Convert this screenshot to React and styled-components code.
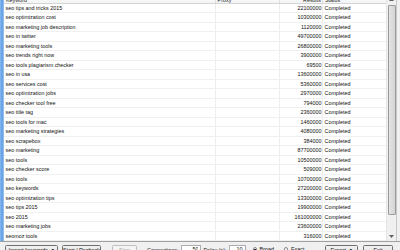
import React from "react";
import styled, { createGlobalStyle } from "styled-components";

const rows = [
  ["seo tips and tricks 2015", "22100000"],
  ["seo optimization cost", "10300000"],
  ["seo marketing job description", "1120000"],
  ["seo in twitter", "49700000"],
  ["seo marketing tools", "26800000"],
  ["seo trends right now", "3900000"],
  ["seo tools plagiarism checker", "69500"],
  ["seo in usa", "13600000"],
  ["seo services cost", "5360000"],
  ["seo optimization jobs", "2970000"],
  ["seo checker tool free", "794000"],
  ["seo title tag", "2360000"],
  ["seo tools for mac", "1460000"],
  ["seo marketing strategies", "4080000"],
  ["seo scrapebox", "384000"],
  ["seo marketing", "87700000"],
  ["seo tools", "10500000"],
  ["seo checker score", "509000"],
  ["seo tools", "10700000"],
  ["seo keywords", "27200000"],
  ["seo optimization tips", "13300000"],
  ["seo tips 2015", "19900000"],
  ["seo 2015", "161000000"],
  ["seo marketing jobs", "23600000"],
  ["seomoz tools", "316000"],
];

const App = () => (
  <Window>
    <GlobalStyle />
    <ListFrame>
      <Strip />
      <Table>
        <HeaderRow>
          <HeadCell>Keyword</HeadCell>
          <HeadCell>Proxy</HeadCell>
          <HeadCell $right>Results</HeadCell>
          <HeadCell $last>Status</HeadCell>
        </HeaderRow>
        {rows.map(([kw, res], i) => (
          <Row key={i}>
            <Cell>{kw}</Cell>
            <Cell />
            <Cell $right>{res}</Cell>
            <Cell $last>Completed</Cell>
          </Row>
        ))}
      </Table>
      <Scrollbar>
        <ArrowBtn>
          <svg width="5" height="3" viewBox="0 0 5 3">
            <path d="M0 3 L2.5 0 L5 3 Z" fill="#606060" />
          </svg>
        </ArrowBtn>
        <Track>
          <Thumb />
        </Track>
        <ArrowBtn>
          <svg width="5" height="3" viewBox="0 0 5 3">
            <path d="M0 0 L2.5 3 L5 0 Z" fill="#606060" />
          </svg>
        </ArrowBtn>
      </Scrollbar>
      <RightEdge />
    </ListFrame>
    <Toolbar>
      <Button $w={53}>
        Import keywords <Caret>▼</Caret>
      </Button>
      <Button $w={39} $ml={4}>Start / Recheck</Button>
      <Button $w={25} $ml={11} disabled>Stop</Button>
      <Label $ml={10}>Connections:</Label>
      <Input $w={20} $ml={3} defaultValue="50" />
      <Label $ml={2}>Delay (s):</Label>
      <Input $w={17} $ml={2} defaultValue="10" />
      <RadioItem $ml={7}>
        <Radio $on />
        Broad
      </RadioItem>
      <RadioItem $ml={10}>
        <Radio />
        Exact
      </RadioItem>
      <Button $w={33} $ml="auto">
        Export <Caret>▼</Caret>
      </Button>
      <Button $w={30} $ml={5}>Exit</Button>
    </Toolbar>
  </Window>
);

const GlobalStyle = createGlobalStyle`
  html, body {
    margin: 0;
    padding: 0;
    background: #f0f0f0;
    overflow: hidden;
  }
`;

const font = `"Liberation Sans", Arial, sans-serif`;

const Window = styled.div`
  width: 400px;
  height: 250px;
  overflow: hidden;
  display: flex;
  flex-direction: column;
  background: #f0f0f0;
  font-family: ${font};
  font-size: 5.4px;
  color: #111;
`;

const ListFrame = styled.div`
  margin-top: -6px;
  height: 248px;
  flex: none;
  display: flex;
  background: #fff;
  border-bottom: 0.5px solid #a0a0a0;
  box-sizing: border-box;
`;

const Strip = styled.div`
  width: 4px;
  flex: none;
  background: linear-gradient(90deg, #8dbbee 0%, #5d9be6 55%, #a8caf0 100%);
`;

const Table = styled.div`
  flex: 1;
  display: flex;
  flex-direction: column;
`;

const cols = "211.6px 64.4px 43px 1fr";

const HeaderRow = styled.div`
  display: grid;
  grid-template-columns: ${cols};
  height: 9.5px;
  flex: none;
  box-sizing: border-box;
  background: linear-gradient(#ffffff, #f3f4f6);
  border-bottom: 1px solid #d5d5d5;
`;

const HeadCell = styled.div`
  line-height: 6px;
  padding: ${(p) => (p.$right ? "3px 1px 0 0" : "3px 0 0 2px")};
  text-align: ${(p) => (p.$right ? "right" : "left")};
  border-right: ${(p) => (p.$last ? "none" : "1px solid #dedfe2")};
  color: #222;
  white-space: nowrap;
  overflow: hidden;
`;

const Row = styled.div`
  display: grid;
  grid-template-columns: ${cols};
  height: 9.53px;
  flex: none;
  box-sizing: border-box;
  border-bottom: 1px solid #f0f0f0;
`;

const Cell = styled.div`
  line-height: 8.5px;
  padding: ${(p) => (p.$right ? "0 0.5px 0 0" : "0 0 0 1.5px")};
  text-align: ${(p) => (p.$right ? "right" : "left")};
  border-right: ${(p) => (p.$last ? "none" : "1px solid #ededed")};
  white-space: nowrap;
  overflow: hidden;
`;

const Scrollbar = styled.div`
  width: 9px;
  flex: none;
  display: flex;
  flex-direction: column;
  background: #f0f0f0;
  border-left: 1px solid #e6e6e6;
`;

const ArrowBtn = styled.div`
  height: 10px;
  flex: none;
  display: flex;
  align-items: center;
  justify-content: center;
`;

const Track = styled.div`
  flex: 1;
  display: flex;
  flex-direction: column;
  padding: 1px 0.5px 0;
`;

const Thumb = styled.div`
  height: 208px;
  border: 0.5px solid #9c9c9c;
  border-radius: 1px;
  background: linear-gradient(90deg, #e4e4e4, #d4d4d4);
`;

const RightEdge = styled.div`
  width: 3px;
  flex: none;
  background: #f0f0f0;
  border-left: 0.5px solid #c8c8c8;
`;

const Toolbar = styled.div`
  flex: 1;
  display: flex;
  align-items: flex-start;
  padding: 2.5px 7px 0 5px;
  background: #f0f0f0;
  overflow: hidden;
`;

const Button = styled.button`
  flex: none;
  width: ${(p) => p.$w}px;
  height: 12px;
  margin-left: ${(p) => (p.$ml === "auto" ? "auto" : `${p.$ml || 0}px`)};
  padding: 0;
  box-sizing: border-box;
  border: 0.5px solid ${(p) => (p.disabled ? "#bfbfbf" : "#707070")};
  border-radius: 1.5px;
  background: ${(p) =>
    p.disabled ? "#f4f4f4" : "linear-gradient(#f2f2f2, #e5e5e5 50%, #dddddd)"};
  color: ${(p) => (p.disabled ? "#a0a0a0" : "#111")};
  font-family: ${font};
  font-size: 5.4px;
  line-height: 7px;
  text-align: center;
  display: flex;
  align-items: flex-start;
  justify-content: center;
  padding-top: 1.5px;
  white-space: nowrap;
`;

const Caret = styled.span`
  font-size: 3.5px;
  margin-left: 3px;
`;

const Label = styled.span`
  flex: none;
  margin-left: ${(p) => p.$ml || 0}px;
  line-height: 7px;
  padding-top: 2px;
  white-space: nowrap;
`;

const Input = styled.input`
  flex: none;
  width: ${(p) => p.$w}px;
  height: 11px;
  margin: 0 0 0 ${(p) => p.$ml || 0}px;
  box-sizing: border-box;
  border: 0.5px solid #abadb3;
  background: #fff;
  font-family: ${font};
  font-size: 5.4px;
  text-align: right;
  padding: 0 2px 3px 0;
  color: #111;
  outline: none;
`;

const RadioItem = styled.span`
  flex: none;
  display: flex;
  align-items: center;
  gap: 2.5px;
  margin-left: ${(p) => p.$ml || 0}px;
  line-height: 7px;
  padding-top: 1.5px;
  white-space: nowrap;
`;

const Radio = styled.span`
  width: 4.5px;
  height: 4.5px;
  border-radius: 50%;
  box-sizing: border-box;
  border: 0.5px solid #8a8a8a;
  background: ${(p) =>
    p.$on ? "radial-gradient(circle, #1f2a3a 0 38%, #f4f4f4 45%)" : "#f6f6f6"};
`;

export default App;
